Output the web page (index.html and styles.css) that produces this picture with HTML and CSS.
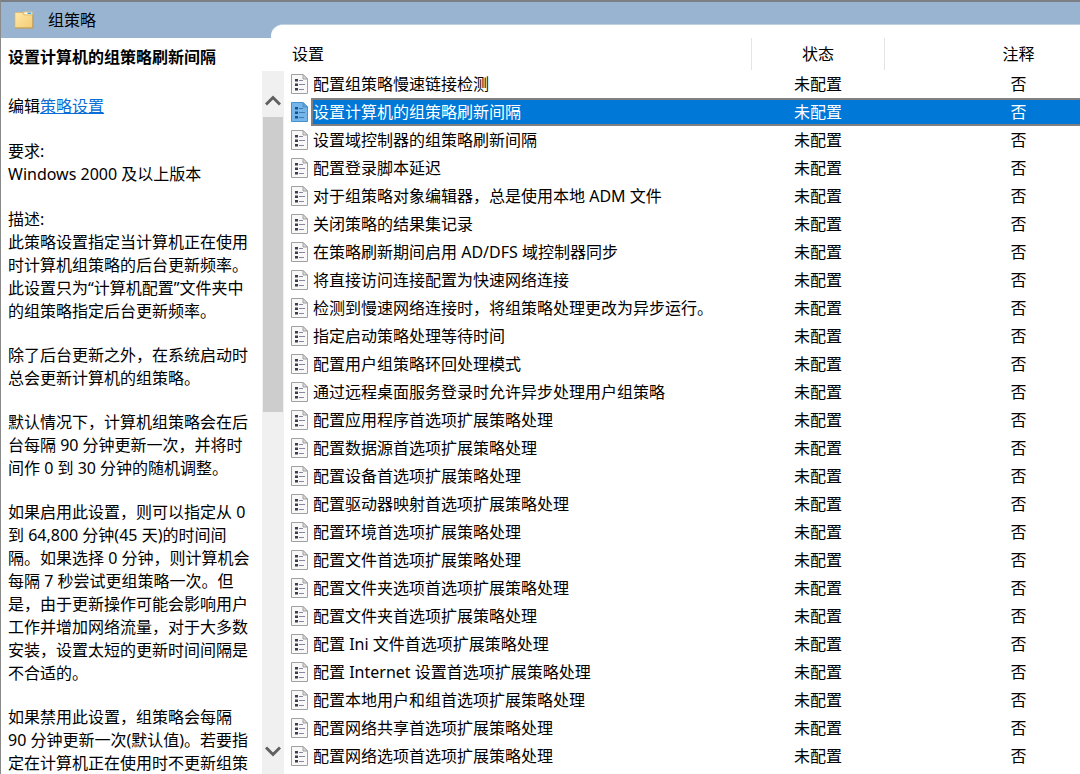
FILE: index.html
```html
<!DOCTYPE html>
<html lang="zh-CN">
<head>
<meta charset="utf-8">
<title>组策略</title>
<link rel="stylesheet" href="styles.css">
</head>
<body>
<svg class="defs" aria-hidden="true">
<defs>
<linearGradient id="manila" x1="0" y1="0" x2="1" y2="1"><stop offset="0" stop-color="#ffe9a8"/><stop offset="1" stop-color="#f4cb74"/></linearGradient>
<symbol id="doc" viewBox="0 0 17 20">
<path class="sheet" d="M.5.5H12L16.5 5V19.5H.5Z"/>
<path class="fold" d="M12 .5V5H16.5Z"/>
<path class="bullets" d="M4 5h3v2.500H4zM4 9.500h3V12H4zM4 14h3v2.500H4z"/>
<path class="lines" d="M8 6.500h4M8 10.500h6M8 15.500h5"/>
</symbol>
</defs>
</svg>
<div class="window">
<header class="titlebar">
<div class="title">
<svg class="folder" viewBox="0 0 20 18" aria-hidden="true"><path d="M9 6V1.500Q9 .5 10 .5H17.500Q18.500 .5 18.500 1.500V6Z" fill="#e9c875"/><path d="M10.500 1.500H17.500V3.500H10.500Z" fill="#fff"/><path d="M13.500 1.500H17V3H13.500Z" fill="#4aa3e0"/><path d="M1 1.500H8.500L10 4H18.500V17H1Z" fill="url(#manila)" stroke="#d9b468" stroke-width=".7"/><path d="M1 17H19V4" fill="none" stroke="#b99a5a"/></svg>
<h1>组策略</h1>
</div>
<div class="tab"></div>
</header>
<div class="body">
<aside class="details">
<h2>设置计算机的组策略刷新间隔</h2>
<p class="edit">编辑<a href="#">策略设置</a></p>
<p class="need">要求:<br>Windows 2000 及以上版本</p>
<p>描述:<br>此策略设置指定当计算机正在使用<br>时计算机组策略的后台更新频率。<br>此设置只为“计算机配置”文件夹中<br>的组策略指定后台更新频率。</p>
<p>除了后台更新之外，在系统启动时<br>总会更新计算机的组策略。</p>
<p>默认情况下，计算机组策略会在后<br>台每隔 90 分钟更新一次，并将时<br>间作 0 到 30 分钟的随机调整。</p>
<p>如果启用此设置，则可以指定从 0<br>到 64,800 分钟(45 天)的时间间<br>隔。如果选择 0 分钟，则计算机会<br>每隔 7 秒尝试更组策略一次。但<br>是，由于更新操作可能会影响用户<br>工作并增加网络流量，对于大多数<br>安装，设置太短的更新时间间隔是<br>不合适的。</p>
<p>如果禁用此设置，组策略会每隔<br>90 分钟更新一次(默认值)。若要指<br>定在计算机正在使用时不更新组策</p>
</aside>
<div class="scrollbar">
<button class="arrow up" type="button" aria-label="向上滚动"><svg viewBox="0 0 16 12"><path d="M1 10.500L8 3.500L15 10.500"/></svg></button>
<div class="thumb"></div>
<button class="arrow down" type="button" aria-label="向下滚动"><svg viewBox="0 0 16 12"><path d="M1 2.500L8 9.500L15 2.500"/></svg></button>
</div>
<main class="list">
<table>
<colgroup><col class="col-icon"><col><col class="col-state"><col class="col-note"></colgroup>
<thead><tr><th class="setting" colspan="2">设置</th><th class="state">状态</th><th class="note">注释</th></tr></thead>
<tbody>
<tr><td class="icon"><svg><use href="#doc"/></svg></td><td class="name">配置组策略慢速链接检测</td><td class="state">未配置</td><td class="note">否</td></tr>
<tr class="selected"><td class="icon"><svg><use href="#doc"/></svg></td><td class="name">设置计算机的组策略刷新间隔</td><td class="state">未配置</td><td class="note">否</td></tr>
<tr><td class="icon"><svg><use href="#doc"/></svg></td><td class="name">设置域控制器的组策略刷新间隔</td><td class="state">未配置</td><td class="note">否</td></tr>
<tr><td class="icon"><svg><use href="#doc"/></svg></td><td class="name">配置登录脚本延迟</td><td class="state">未配置</td><td class="note">否</td></tr>
<tr><td class="icon"><svg><use href="#doc"/></svg></td><td class="name">对于组策略对象编辑器，总是使用本地 ADM 文件</td><td class="state">未配置</td><td class="note">否</td></tr>
<tr><td class="icon"><svg><use href="#doc"/></svg></td><td class="name">关闭策略的结果集记录</td><td class="state">未配置</td><td class="note">否</td></tr>
<tr><td class="icon"><svg><use href="#doc"/></svg></td><td class="name">在策略刷新期间启用 AD/DFS 域控制器同步</td><td class="state">未配置</td><td class="note">否</td></tr>
<tr><td class="icon"><svg><use href="#doc"/></svg></td><td class="name">将直接访问连接配置为快速网络连接</td><td class="state">未配置</td><td class="note">否</td></tr>
<tr><td class="icon"><svg><use href="#doc"/></svg></td><td class="name">检测到慢速网络连接时，将组策略处理更改为异步运行。</td><td class="state">未配置</td><td class="note">否</td></tr>
<tr><td class="icon"><svg><use href="#doc"/></svg></td><td class="name">指定启动策略处理等待时间</td><td class="state">未配置</td><td class="note">否</td></tr>
<tr><td class="icon"><svg><use href="#doc"/></svg></td><td class="name">配置用户组策略环回处理模式</td><td class="state">未配置</td><td class="note">否</td></tr>
<tr><td class="icon"><svg><use href="#doc"/></svg></td><td class="name">通过远程桌面服务登录时允许异步处理用户组策略</td><td class="state">未配置</td><td class="note">否</td></tr>
<tr><td class="icon"><svg><use href="#doc"/></svg></td><td class="name">配置应用程序首选项扩展策略处理</td><td class="state">未配置</td><td class="note">否</td></tr>
<tr><td class="icon"><svg><use href="#doc"/></svg></td><td class="name">配置数据源首选项扩展策略处理</td><td class="state">未配置</td><td class="note">否</td></tr>
<tr><td class="icon"><svg><use href="#doc"/></svg></td><td class="name">配置设备首选项扩展策略处理</td><td class="state">未配置</td><td class="note">否</td></tr>
<tr><td class="icon"><svg><use href="#doc"/></svg></td><td class="name">配置驱动器映射首选项扩展策略处理</td><td class="state">未配置</td><td class="note">否</td></tr>
<tr><td class="icon"><svg><use href="#doc"/></svg></td><td class="name">配置环境首选项扩展策略处理</td><td class="state">未配置</td><td class="note">否</td></tr>
<tr><td class="icon"><svg><use href="#doc"/></svg></td><td class="name">配置文件首选项扩展策略处理</td><td class="state">未配置</td><td class="note">否</td></tr>
<tr><td class="icon"><svg><use href="#doc"/></svg></td><td class="name">配置文件夹选项首选项扩展策略处理</td><td class="state">未配置</td><td class="note">否</td></tr>
<tr><td class="icon"><svg><use href="#doc"/></svg></td><td class="name">配置文件夹首选项扩展策略处理</td><td class="state">未配置</td><td class="note">否</td></tr>
<tr><td class="icon"><svg><use href="#doc"/></svg></td><td class="name">配置 Ini 文件首选项扩展策略处理</td><td class="state">未配置</td><td class="note">否</td></tr>
<tr><td class="icon"><svg><use href="#doc"/></svg></td><td class="name">配置 Internet 设置首选项扩展策略处理</td><td class="state">未配置</td><td class="note">否</td></tr>
<tr><td class="icon"><svg><use href="#doc"/></svg></td><td class="name">配置本地用户和组首选项扩展策略处理</td><td class="state">未配置</td><td class="note">否</td></tr>
<tr><td class="icon"><svg><use href="#doc"/></svg></td><td class="name">配置网络共享首选项扩展策略处理</td><td class="state">未配置</td><td class="note">否</td></tr>
<tr><td class="icon"><svg><use href="#doc"/></svg></td><td class="name">配置网络选项首选项扩展策略处理</td><td class="state">未配置</td><td class="note">否</td></tr>
</tbody>
</table>
</main>
</div>
</div>
</body>
</html>
```

FILE: styles.css
```css
* { box-sizing: border-box; }
body {
  margin: 0;
  background: #fff;
  color: #000;
  font: 16px/23px "Noto Sans", "Noto Sans CJK SC", sans-serif;
}
h1, h2, p { margin: 0; font-size: 16px; }
h1 { font-weight: 400; }
.defs { position: absolute; width: 0; height: 0; }
.window {
  display: flex;
  flex-direction: column;
  height: 100vh;
  overflow: hidden;
  border-top: 2px solid #7b7f85;
  border-left: 1px solid #8a8a8a;
}
.titlebar {
  display: flex;
  flex: none;
  height: 36px;
  background: #99b4d1;
}
.title {
  display: flex;
  align-items: center;
  gap: 14px;
  width: 270px;
  padding-left: 13px;
}
.folder { width: 20px; height: 18px; }
.tab {
  flex: 1;
  margin-top: 22px;
  background: #fff;
  border-top: 1px solid #c0d0e2;
  border-top-left-radius: 12px;
}
.body { display: flex; flex: 1; min-height: 0; }
.details {
  flex: none;
  width: 261px;
  padding: 8px 0 0 7px;
  overflow: hidden;
  white-space: nowrap;
}
.details p { margin-bottom: 21px; }
.details h2 { margin-bottom: 26px; font-weight: 700; }
.details .edit, .details .need { margin-bottom: 22px; }
a { color: #0a6cd6; text-decoration: underline; }
.scrollbar {
  display: flex;
  flex-direction: column;
  flex: none;
  width: 22px;
  margin-top: 33px;
  padding: 0 1px;
  background: #f0f0f0;
}
.thumb { flex: none; height: 295px; background: #cdcdcd; }
.arrow {
  display: flex;
  flex: none;
  justify-content: center;
  height: 46px;
  padding: 0;
  border: 0;
  background: none;
}
.up { align-items: flex-end; padding-bottom: 11px; }
.down { align-items: center; margin-top: auto; }
.arrow svg { width: 16px; height: 12px; fill: none; stroke: #606060; stroke-width: 3; }
.list { flex: 1; min-width: 0; overflow: hidden; }
table { width: 100%; table-layout: fixed; border-collapse: separate; border-spacing: 0; }
th, td { height: 28px; padding: 0; line-height: 24px; white-space: nowrap; }
th { height: 32px; font-weight: 400; }
.col-icon { width: 27px; }
.col-state { width: 134px; }
.col-note { width: 195px; }
.setting { padding-left: 8px; text-align: left; }
th.state { border-left: 1px solid #e5e5e5; border-right: 1px solid #e5e5e5; }
.state { text-align: center; }
.note { padding-left: 72px; text-align: center; }
td.icon { padding-left: 7px; }
.icon svg { display: block; width: 17px; height: 20px; }
.name { padding-left: 2px; text-align: left; }
.icon {
  --sheet: #f8f8f9;
  --edge: #a0a0a0;
  --fold: #dddddd;
  --bullet: #3c3c50;
  --line: #8a86a0;
}
.sheet { fill: var(--sheet); stroke: var(--edge); }
.fold { fill: var(--fold); stroke: var(--edge); }
.bullets { fill: var(--bullet); }
.lines { fill: none; stroke: var(--line); }
.selected .icon {
  --sheet: #74b5ea;
  --edge: #4a90c8;
  --fold: #5fa3d8;
  --bullet: #14508a;
  --line: #3a7ab8;
}
.selected td { color: #fff; }
.selected td:not(.icon) { background: #0078d7; border: solid #808080; border-width: 2px 0; }
.selected td.name { border-left-width: 2px; padding-left: 0; }
```
